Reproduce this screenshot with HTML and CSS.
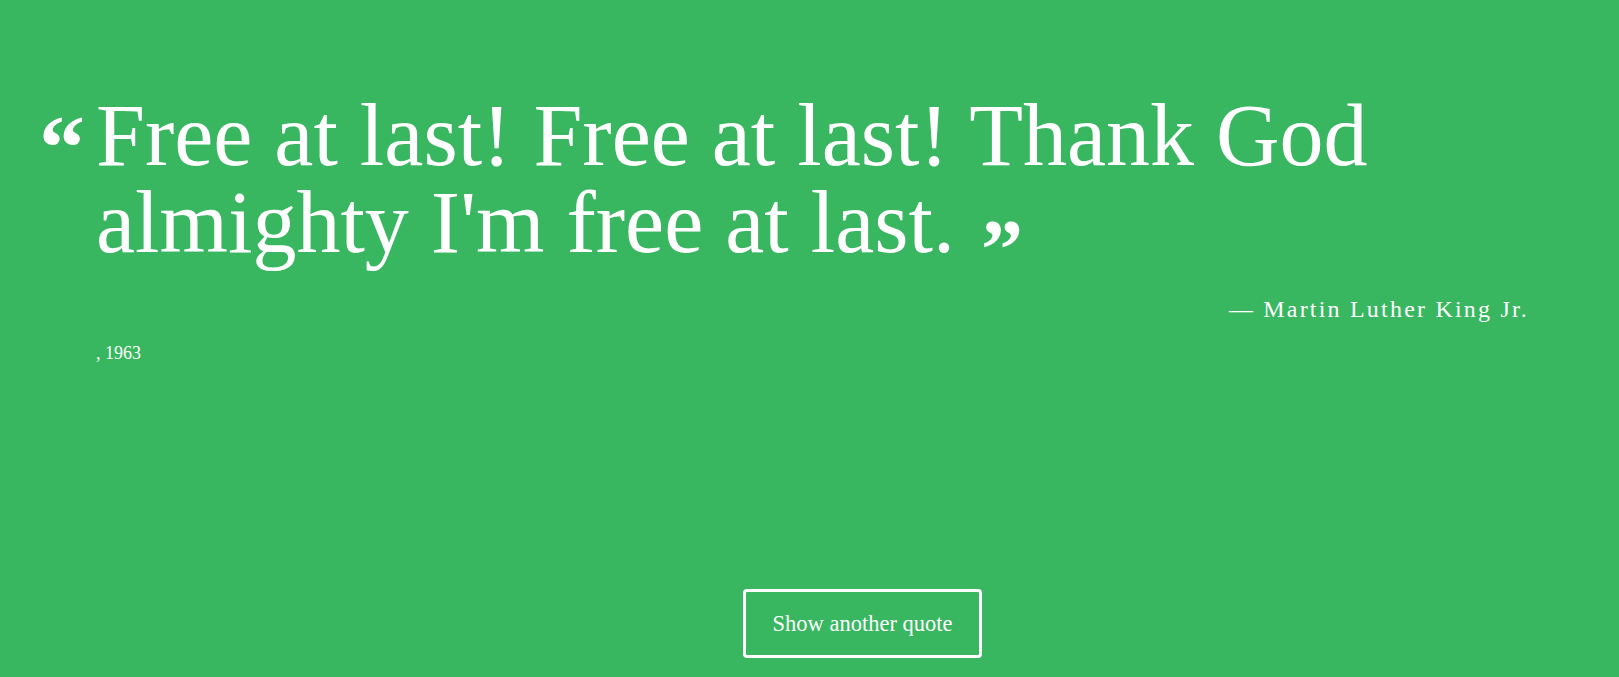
FILE: index.html
```html
<!DOCTYPE html>
<html>
<head>
<meta charset="utf-8">
<link rel="stylesheet" href="styles.css">
</head>
<body>
<main class="page">
  <section class="quote-box">
    <div class="open-mark">&ldquo;</div>
    <div class="quote-body">
      <blockquote class="quote-text">Free at last! Free at last! Thank God almighty I'm free at last. <span class="close-mark">&rdquo;</span></blockquote>
      <p class="author">&mdash; Martin Luther King Jr.</p>
      <p class="year">, 1963</p>
    </div>
  </section>
  <div class="actions">
    <button class="btn">Show another quote</button>
  </div>
</main>
</body>
</html>
```
FILE: styles.css
```css
html, body {
  margin: 0;
  padding: 0;
  height: 100%;
  background: #38b660;
  overflow: hidden;
}
.page {
  height: 677px;
  display: flex;
  flex-direction: column;
  font-family: "Liberation Serif", "DejaVu Serif", serif;
  color: #fff;
}
.quote-box {
  display: flex;
  padding: 92px 90px 0 39px;
}
.open-mark {
  width: 57px;
  flex: none;
  font-size: 92px;
  line-height: 1;
  font-weight: bold;
  margin-top: 9px;
}
.quote-body {
  flex: 1;
}
.quote-text {
  margin: 0;
  font-size: 88px;
  line-height: 87px;
}
.close-mark {
  font-weight: bold;
  font-size: 84px;
  vertical-align: -26px;
  line-height: 0;
  margin-left: 4px;
}
.author {
  margin: 30px 0 0;
  text-align: right;
  font-size: 24px;
  letter-spacing: 2.2px;
}
.year {
  margin: 20px 0 0;
  font-size: 18px;
}
.actions {
  margin-top: auto;
  padding: 0 0 19px 106px;
  display: flex;
  justify-content: center;
}
.btn {
  width: 239px;
  height: 69px;
  background: transparent;
  border: 3px solid #fff;
  border-radius: 4px;
  color: #fff;
  font-family: "Liberation Serif", "DejaVu Serif", serif;
  font-size: 22.5px;
}
```
